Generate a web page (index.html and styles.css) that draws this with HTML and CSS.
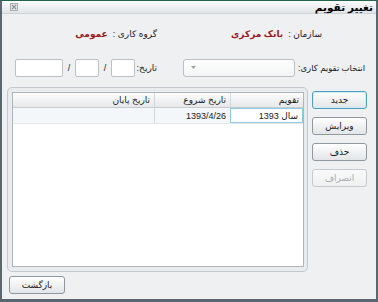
FILE: index.html
```html
<!DOCTYPE html>
<html lang="fa" dir="rtl">
<head>
<meta charset="utf-8">
<link rel="stylesheet" href="styles.css">
</head>
<body>
<div class="window">
  <div class="titlebar">
    <span class="title">تغییر تقویم</span>
    <svg class="close" width="8" height="8" viewBox="0 0 8 8"><rect x="0.5" y="0.5" width="7" height="7" fill="#e4e6e8" stroke="#a9aeb3"/><path d="M2 2L6 6M6 2L2 6" stroke="#8d9398" stroke-width="1.2"/></svg>
  </div>
  <div class="content">
    <div class="info">
      <div class="info-item org"><span>سازمان :</span><b class="val">بانک مرکزی</b></div>
      <div class="info-item"><span>گروه کاری :</span><b class="val">عمومی</b></div>
    </div>
    <div class="filters">
      <span class="lbl cal-lbl">انتخاب تقویم کاری:</span>
      <div class="combo"><svg width="5" height="4" viewBox="0 0 5 4"><path d="M0 0H5L2.5 3Z" fill="#9aa0a6"/></svg></div>
      <span class="lbl date-lbl">تاریخ:</span>
      <div class="box b-day"></div>
      <span class="slash">/</span>
      <div class="box b-mon"></div>
      <span class="slash">/</span>
      <div class="box b-year"></div>
    </div>
    <div class="main">
      <div class="buttons">
        <button class="btn focus">جدید</button>
        <button class="btn">ویرایش</button>
        <button class="btn">حذف</button>
        <button class="btn disabled">انصراف</button>
      </div>
      <div class="panel">
        <div class="grid">
          <div class="row head">
            <div class="cell c1">تقویم</div>
            <div class="cell c2">تاریخ شروع</div>
            <div class="cell c3">تاریخ پایان</div>
          </div>
          <div class="row data">
            <div class="cell c1 sel">سال 1393</div>
            <div class="cell c2">1393/4/26</div>
            <div class="cell c3"></div>
          </div>
        </div>
      </div>
    </div>
    <div class="footer">
      <button class="btn back">بازگشت</button>
    </div>
  </div>
</div>
</body>
</html>
```

FILE: styles.css
```css
* { box-sizing: border-box; }
html, body { margin: 0; padding: 0; }
body {
  font-family: "Liberation Sans", "DejaVu Sans", sans-serif;
  font-size: 9px;
  color: #1a1a1a;
  background: #fff;
}
.window {
  width: 378px;
  height: 302px;
  direction: rtl;
  border: 2px solid #5b666f;
  border-top: 1px solid #24634d;
  border-bottom-width: 3px;
  background: #eef0f2;
  display: flex;
  flex-direction: column;
}
.titlebar {
  height: 13px;
  flex: none;
  display: flex;
  align-items: center;
  justify-content: space-between;
  padding: 0 3px 0 8px;
  background: linear-gradient(#fbfcfc, #e1e4e7);
  border-bottom: 1px solid #cdd2d6;
}
.title {
  font-weight: bold;
  font-size: 10.5px;
  color: #000;
}
.close { display: block; }
.content {
  flex: 1;
  display: flex;
  flex-direction: column;
  padding: 0 8px 0 5px;
}
.info {
  display: flex;
  height: 16px;
  margin-top: 12px;
  padding-right: 46px;
  align-items: center;
}
.info-item {
  display: flex;
  gap: 5px;
  white-space: nowrap;
}
.info-item.org { width: 165px; }
.val { color: #9b1b1e; font-weight: bold; }
.filters {
  display: flex;
  align-items: center;
  height: 18px;
  margin-top: 17px;
  padding-right: 3px;
}
.lbl { white-space: nowrap; flex: none; }
.cal-lbl { width: 65px; font-size: 8.5px; }
.combo {
  width: 112px;
  height: 18px;
  margin-right: 5px;
  border: 1px solid #b9c0c6;
  border-radius: 3px;
  background: linear-gradient(#ffffff, #f3f4f5);
  display: flex;
  align-items: center;
  justify-content: flex-end;
  padding-left: 7px;
}
.combo svg { display: block; }
.date-lbl { margin-right: 26px; width: 18px; }
.box {
  height: 18px;
  border: 1px solid #b9c0c6;
  border-radius: 2px;
  background: #fff;
}
.b-day { width: 24px; margin-right: 4px; }
.b-mon { width: 24px; }
.b-year { width: 48px; }
.slash { width: 12px; text-align: center; }
.main {
  display: flex;
  margin-top: 10px;
  height: 185px;
}
.buttons {
  width: 55px;
  display: flex;
  flex-direction: column;
  gap: 8px;
  padding-top: 4px;
  margin-left: 4px;
  margin-right: 1px;
}
.btn {
  height: 18px;
  width: 55px;
  font-family: inherit;
  font-size: 9px;
  color: #1a1a1a;
  border: 1px solid #8f989f;
  border-radius: 3px;
  background: linear-gradient(#ffffff, #f2f3f4 45%, #e2e5e8);
  padding: 0;
}
.btn.focus { border-color: #4ea0c2; box-shadow: inset 0 0 0 1px #d6ecf5; }
.btn.disabled { color: #a8adb2; border-color: #c5cacf; background: linear-gradient(#fafafa, #eff0f1); }
.panel {
  flex: 1;
  border: 1px solid #c3c9ce;
  border-radius: 5px;
  padding: 4px 3px 4px 4px;
  background: #e9ecee;
}
.grid {
  height: 100%;
  border: 1px solid #aeb5bb;
  background: #fff;
}
.row { display: flex; }
.head {
  height: 15px;
  background: linear-gradient(#fdfdfd, #e6e8ea);
  border-bottom: 1px solid #c6cbcf;
}
.data {
  height: 16px;
  background: #f4f7f9;
  border-bottom: 1px solid #e4e8eb;
}
.cell {
  padding: 0 4px;
  display: flex;
  align-items: center;
  white-space: nowrap;
}
.c1 { width: 73px; border-left: 1px solid #d3d7db; }
.c2 { width: 76px; border-left: 1px solid #d3d7db; }
.c3 { flex: 1; }
.cell.sel {
  background: #fff;
  border: 1px solid #8ccbe0;
}
.footer {
  margin-top: 4px;
  padding-left: 2px;
  display: flex;
  justify-content: flex-end;
}
.btn.back { width: 56px; }
```
